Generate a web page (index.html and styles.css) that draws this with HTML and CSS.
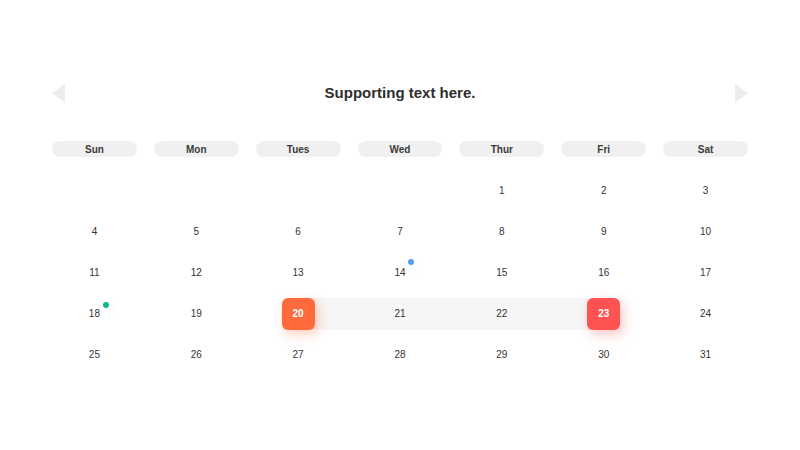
FILE: index.html
```html
<!DOCTYPE html>
<html>
<head>
<meta charset="utf-8">
<link rel="stylesheet" href="styles.css">
</head>
<body>
<div class="page">
  <div class="header">
    <svg class="arrow" width="14" height="20" viewBox="0 0 14 20"><polygon points="0,10 13,0.5 13,19.5" fill="#eeeeee"/></svg>
    <div class="title">Supporting text here.</div>
    <svg class="arrow" width="14" height="20" viewBox="0 0 14 20"><polygon points="14,10 1,0.5 1,19.5" fill="#eeeeee"/></svg>
  </div>
  <div class="weekdays">
    <div class="wd">Sun</div><div class="wd">Mon</div><div class="wd">Tues</div><div class="wd">Wed</div><div class="wd">Thur</div><div class="wd">Fri</div><div class="wd">Sat</div>
  </div>
  <div class="dates">
    <div class="d"></div><div class="d"></div><div class="d"></div><div class="d"></div>
    <div class="d"><span>1</span></div><div class="d"><span>2</span></div><div class="d"><span>3</span></div>
    <div class="d"><span>4</span></div><div class="d"><span>5</span></div><div class="d"><span>6</span></div><div class="d"><span>7</span></div><div class="d"><span>8</span></div><div class="d"><span>9</span></div><div class="d"><span>10</span></div>
    <div class="d"><span>11</span></div><div class="d"><span>12</span></div><div class="d"><span>13</span></div><div class="d"><span>14<i class="dot blue"></i></span></div><div class="d"><span>15</span></div><div class="d"><span>16</span></div><div class="d"><span>17</span></div>
    <div class="d"><span>18<i class="dot green"></i></span></div><div class="d"><span>19</span></div>
    <div class="d start"><span class="box orange">20</span></div>
    <div class="d mid"><span>21</span></div><div class="d mid"><span>22</span></div>
    <div class="d end"><span class="box red">23</span></div>
    <div class="d"><span>24</span></div>
    <div class="d"><span>25</span></div><div class="d"><span>26</span></div><div class="d"><span>27</span></div><div class="d"><span>28</span></div><div class="d"><span>29</span></div><div class="d"><span>30</span></div><div class="d"><span>31</span></div>
  </div>
</div>
</body>
</html>
```
FILE: styles.css
```css
html, body {
  margin: 0;
  padding: 0;
  background: #ffffff;
}
body {
  width: 800px;
  height: 450px;
  overflow: hidden;
  font-family: "Liberation Sans", Arial, sans-serif;
  color: #333333;
}
.page {
  padding: 83px 52px 0 52px;
}
.header {
  display: flex;
  align-items: center;
  justify-content: space-between;
  height: 20px;
}
.arrow {
  display: block;
}
.title {
  font-size: 15px;
  font-weight: bold;
  color: #2e2e2e;
  line-height: 20px;
}
.weekdays {
  margin-top: 38px;
  display: grid;
  grid-template-columns: repeat(7, 1fr);
  column-gap: 17px;
}
.wd {
  height: 16px;
  line-height: 17px;
  border-radius: 8px;
  background: #f0f0f0;
  text-align: center;
  font-size: 10px;
  font-weight: bold;
  color: #3a3a3a;
}
.dates {
  margin-top: 13px;
  display: grid;
  grid-template-columns: repeat(7, 1fr);
  column-gap: 17px;
  grid-auto-rows: 41px;
}
.d {
  position: relative;
  display: flex;
  align-items: center;
  justify-content: center;
  font-size: 10px;
  color: #333333;
}
.d span {
  position: relative;
  z-index: 1;
}
.d.mid::before, .d.start::before, .d.end::before {
  content: "";
  position: absolute;
  top: 50%;
  height: 32px;
  margin-top: -16px;
  background: #f6f6f6;
  z-index: 0;
}
.d.mid::before { left: -9px; right: -9px; }
.d.start::before { left: 50%; right: -9px; }
.d.end::before { left: -9px; right: 50%; }
.box {
  width: 33px;
  height: 32px;
  border-radius: 6px;
  display: flex;
  align-items: center;
  justify-content: center;
  color: #ffffff;
  font-weight: bold;
  font-size: 10px;
}
.box.orange {
  background: #ff6a3d;
  box-shadow: 3px 4px 12px rgba(255, 106, 61, 0.35);
}
.box.red {
  background: #ff5252;
  box-shadow: 3px 4px 12px rgba(255, 82, 82, 0.35);
}
.dot {
  position: absolute;
  width: 6px;
  height: 6px;
  border-radius: 50%;
}
.dot.green {
  background: #12b58e;
  left: 14px;
  top: -6px;
  box-shadow: 4px 3px 10px rgba(18, 181, 142, 0.12);
}
.dot.blue {
  background: #5a9df0;
  left: 14px;
  top: -8px;
  box-shadow: 4px 3px 10px rgba(90, 157, 240, 0.12);
}
```
